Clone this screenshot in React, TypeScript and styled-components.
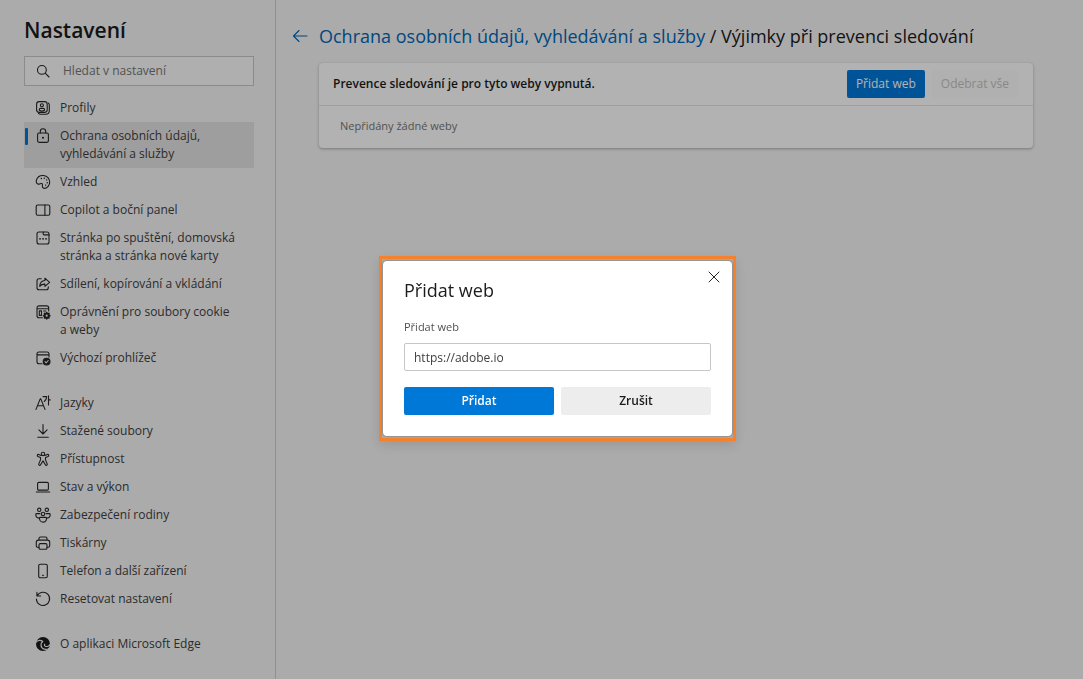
import React from 'react';
import styled, { createGlobalStyle, css } from 'styled-components';

const GlobalStyle = createGlobalStyle`
  *, *::before, *::after { box-sizing: border-box; }
  body {
    margin: 0;
    background: #f5f5f5;
    color: #1b1b1b;
    font-family: 'Open Sans', 'Noto Sans', sans-serif;
    font-size: 12px;
    line-height: 18px;
  }
  button, input { font: inherit; color: inherit; }
  h1, h2, p, ul { margin: 0; padding: 0; }
`;

const Page = styled.div`
  display: flex;
  min-height: 100vh;
`;

const Sidebar = styled.aside`
  flex: 0 0 276px;
  padding: 14px 21px 20px 24px;
  border-right: 1px solid #cfcfcf;
`;

const SidebarTitle = styled.h1`
  font-size: 21px;
  line-height: 32px;
  font-weight: 600;
`;

const SearchBox = styled.label`
  display: flex;
  align-items: center;
  gap: 12px;
  height: 30px;
  margin: 10px 0 8px;
  padding: 0 11px 0 10px;
  background: #fbfbfb;
  border: 1px solid #c8c8c8;
  svg { margin: 0; }
`;

const SearchInput = styled.input`
  flex: 1;
  min-width: 0;
  padding: 0;
  border: 0;
  outline: 0;
  background: transparent;
  &::placeholder { color: #767676; opacity: 1; }
`;

const NavList = styled.ul`
  list-style: none;
  & + & { margin-top: 17px; }
`;

const NavLink = styled.a<{ $active?: boolean }>`
  position: relative;
  display: flex;
  align-items: flex-start;
  gap: 9px;
  padding: 5px 8px 5px 11px;
  color: #404040;
  text-decoration: none;
  ${({ $active }) => $active && css`
    background: #e3e3e3;
    &::before {
      content: '';
      position: absolute;
      left: 1px;
      top: 6px;
      width: 3px;
      height: 17px;
      border-radius: 1px;
      background: #0078d4;
    }
  `}
`;

const Glyph = styled.svg`
  flex: none;
  width: 16px;
  height: 16px;
  margin-top: 1px;
  fill: none;
  stroke: #262626;
  stroke-width: 1.1;
  stroke-linecap: round;
  stroke-linejoin: round;
`;

const Main = styled.main`
  flex: 1;
  min-width: 0;
  padding: 22px 50px 24px 16px;
`;

const Heading = styled.header`
  display: flex;
  align-items: center;
  gap: 11px;
`;

const BackButton = styled.button`
  display: flex;
  padding: 0;
  border: 0;
  background: none;
  svg { stroke: #0067b8; margin: 0; }
`;

const Breadcrumb = styled.h2`
  font-size: 18px;
  line-height: 28px;
  font-weight: 500;
  white-space: nowrap;
  a { color: #0067b8; text-decoration: none; }
`;

const Card = styled.section`
  margin: 13px 0 0 27px;
  background: #fff;
  border-radius: 4px;
  box-shadow: 0 1px 3px rgba(0, 0, 0, 0.3);
`;

const CardHeader = styled.div`
  display: flex;
  align-items: center;
  gap: 7px;
  min-height: 43px;
  padding: 7px 15px 7px 14px;
  border-bottom: 1px solid #e6e6e6;
`;

const CardTitle = styled.p`
  flex: 1;
  font-weight: 600;
`;

const CardBody = styled.p`
  padding: 11px 21px 13px;
  color: #767676;
  font-size: 11px;
`;

const Button = styled.button<{ $kind: 'primary' | 'plain' | 'ghost'; $strong?: boolean }>`
  height: 28px;
  padding: 0 9px;
  border: 0;
  border-radius: 2px;
  white-space: nowrap;
  font-weight: ${({ $strong }) => ($strong ? 600 : 400)};
  ${({ $kind }) => $kind === 'primary' && css`background: #0078d7; color: #fff;`}
  ${({ $kind }) => $kind === 'plain' && css`background: #ededed; color: #1b1b1b;`}
  ${({ $kind }) => $kind === 'ghost' && css`background: #fcfcfc; color: #c4c4c4;`}
`;

const Overlay = styled.div`
  position: fixed;
  inset: 0;
  display: flex;
  align-items: center;
  justify-content: center;
  padding: 18px 0 0 32px;
  background: rgba(0, 0, 0, 0.3);
`;

const Highlight = styled.div`
  padding: 2px 1px;
  border: 3px solid #f5812c;
  box-shadow: 0 4px 12px rgba(0, 0, 0, 0.12);
`;

const Dialog = styled.form`
  position: relative;
  width: 349px;
  padding: 14px 21px 21px;
  background: #fff;
  border-radius: 4px;
  box-shadow: 0 0 2px rgba(0, 0, 0, 0.5);
`;

const DialogTitle = styled.h2`
  font-size: 18px;
  line-height: 30px;
  font-weight: 500;
`;

const FieldLabel = styled.label`
  display: block;
  margin: 13px 0 7px;
  font-size: 11px;
  color: #505050;
`;

const TextField = styled.input`
  display: block;
  width: 100%;
  height: 28px;
  padding: 0 9px;
  border: 1px solid #c6c6c6;
  border-radius: 2px;
  outline: 0;
  color: #404040;
`;

const Actions = styled.div`
  display: grid;
  grid-template-columns: 1fr 1fr;
  gap: 7px;
  margin-top: 16px;
`;

const CloseButton = styled.button`
  position: absolute;
  top: 8px;
  right: 10px;
  display: flex;
  padding: 0;
  border: 0;
  background: none;
  svg { margin: 0; }
`;

const icons = {
  search: <><circle cx="6.9" cy="6.9" r="4.4" /><path d="M10.2 10.2 14 14" /></>,
  profile: (
    <>
      <rect x="1.6" y="1.6" width="10.6" height="10.8" rx="2.6" />
      <path d="M13.4 3.2c.6.5.9 1.1.9 2v5.6c0 2.2-1.3 3.5-3.5 3.5H5.6c-.9 0-1.6-.3-2.1-.9" />
      <circle cx="6.9" cy="5.2" r="1.5" />
      <path d="M4.3 10.2V9.5c0-.7.5-1.1 1.1-1.1h3c.7 0 1.1.4 1.1 1.1v.7c-1.4 1-3.8 1-5.2 0Z" />
    </>
  ),
  lock: (
    <>
      <rect x="2.6" y="5" width="10.8" height="9.4" rx="1.6" />
      <path d="M5.3 4.900V3.500a2.700 2.700 0 0 1 5.400 0v1.400" />
      <circle cx="8" cy="9.7" r=".5" fill="#262626" />
    </>
  ),
  palette: (
    <>
      <path d="M1.3 6.5C2.2 3.2 5.3 1.2 8.7 1.5c3.4.4 6 3.2 6 6.6 0 3.2-2.3 6.3-5 6.3-1.6 0-2.5-1-2.3-2.4.2-1.2.2-2-.5-2.4-.9-.5-1.6.2-2.7.5-1.9.4-3.3-1.3-2.9-3.6Z" />
      <path d="M6.3 4.5h.1M9.2 4.2h.1M11.6 5.9h.1M12.2 8.7h.1M10.6 11.1h.1" strokeWidth="1.4" />
    </>
  ),
  panel: <><rect x="1.2" y="3" width="13.6" height="10.2" rx="1.5" /><path d="M9.9 3v10.2" /></>,
  startPage: (
    <>
      <rect x="2" y="2" width="12" height="12" rx="2" />
      <path d="M8.2 2v2c0 .6.3.9.9.9H14" />
      <path d="M5 8.8h.1M8 8.8h.1M11 8.8h.1" strokeWidth="1.7" />
    </>
  ),
  share: (
    <>
      <path d="M6.2 2.8H4A2 2 0 0 0 2 4.8v7A2 2 0 0 0 4 13.8h7.3a2 2 0 0 0 2-2v-.9" />
      <path d="M9.9 2.2 14.6 6.3 9.9 10.3V8.1C7.6 8 6 8.7 4.7 10.3 4.9 7.1 6.6 4.8 9.9 4.5Z" />
    </>
  ),
  permissions: (
    <>
      <path d="M7.4 13.7H4A2 2 0 0 1 2 11.7V3.9a2 2 0 0 1 2-2h7.7a2 2 0 0 1 2 2v3M2 4.7h11.7M4.3 6.9h2.2v4.5H4.3ZM8.6 7h2.3" />
      <circle cx="11.7" cy="11.7" r="2.1" strokeWidth="2" />
      <path d="M11.7 8.4v.8M11.7 14.2v.8M8.4 11.7h.8M14.2 11.7h.8M9.4 9.4l.5.5M13.5 13.5l.5.5M14 9.4l-.5.5M9.9 13.5l-.5.5" strokeWidth="1.5" />
    </>
  ),
  defaultBrowser: (
    <>
      <path d="M7 13.7H4A2 2 0 0 1 2 11.7V4a2 2 0 0 1 2-2h8a2 2 0 0 1 2 2v3M2 4.9h12" />
      <circle cx="11.6" cy="11.6" r="3.4" fill="#262626" />
      <path d="m10 11.7 1.1 1.1 2.1-2.2" stroke="#e8e8e8" />
    </>
  ),
  language: (
    <>
      <path d="M1 14.4 5.2 3.9h.6L10 14.4M2.500 10.800h6" />
      <path d="M8 1.600h3.700c-.1 2.400-.8 3.800-2.500 4.900M13.500.8v9.200M13.500 4.900h1.700" />
    </>
  ),
  download: <path d="M8 1.5v9.3M3.9 6.9 8 11l4.1-4.1M2.7 14.3h10.6" />,
  accessibility: (
    <>
      <circle cx="8" cy="2.9" r="1.7" />
      <path d="M6.2 4.5 3.7 3.5c-1.4-.4-2 1.3-.8 1.9l2.6 1.2v2.3l-1.7 4c-.5 1.4 1.2 2.1 1.8.8L8 9.9l2.4 3.8c.6 1.3 2.3.6 1.8-.8l-1.7-4V6.6l2.6-1.2c1.2-.6.6-2.3-.8-1.9L9.8 4.5" />
    </>
  ),
  laptop: <><rect x="2.6" y="3.4" width="10.8" height="7.7" rx="1.2" /><path d="M1.3 13h13.4" /></>,
  family: (
    <>
      <circle cx="4.2" cy="2.8" r="1.7" /><circle cx="11.8" cy="2.8" r="1.7" /><circle cx="8" cy="7" r="1.7" />
      <path d="M5 6.6H1.7c-.5 0-.9.4-.9.9 0 2.2 1.2 3.5 3.2 3.6M11 6.6h3.3c.5 0 .9.4.9.9 0 2.2-1.2 3.5-3.2 3.6M5.3 10.4h5.4c.5 0 .8.3.8.8 0 2.2-1.4 3.9-3.5 3.9s-3.5-1.7-3.5-3.9c0-.5.3-.8.8-.8Z" />
    </>
  ),
  printer: (
    <>
      <path d="M4 12.2H2.7c-.8 0-1.4-.6-1.4-1.4V7.2c0-1.2.9-2.1 2.1-2.1h9.2c1.2 0 2.1.9 2.1 2.1v3.6c0 .8-.6 1.4-1.4 1.4H12M4 5V3.5C4 2.7 4.7 2 5.5 2h5c.8 0 1.5.7 1.5 1.5V5" />
      <rect x="4" y="8.6" width="8" height="5.6" rx="1.3" />
    </>
  ),
  phone: <><rect x="3.7" y="1.2" width="8.6" height="13.6" rx="1.6" /><path d="M7.4 12.2h1.2" /></>,
  reset: <path d="M1.900 1.400v3.600h3.700M2.200 4.700A6.600 6.600 0 1 1 1.400 8" />,
  edge: (
    <>
      <circle cx="8" cy="8" r="7" fill="#1b1b1b" stroke="none" />
      <g stroke="#f0f0f0" strokeWidth="1.2">
        <path d="M.8 6.300C2.800 4 6 3.800 7.600 5.500" />
        <path d="M7.600 5.500C5.200 7.500 5.200 11.800 9.400 13.200c1.700.5 3.400.1 4.800-1.100" />
        <path d="M15.200 8.300c-.7 1.900-3.200 2.700-5 1.900-1.100-.5-.9-1.300-.5-2" />
      </g>
    </>
  ),
  back: <path d="M15 8H1.5M7 2.5 1.5 8 7 13.5" />,
  close: <path d="m3 3 10 10M13 3 3 13" strokeWidth="1" />,
};

type IconName = keyof typeof icons;

const Icon = ({ name }: { name: IconName }) => (
  <Glyph viewBox="0 0 16 16" aria-hidden="true">{icons[name]}</Glyph>
);

const sections: { icon: IconName; label: string; active?: boolean }[][] = [
  [
    { icon: 'profile', label: 'Profily' },
    { icon: 'lock', label: 'Ochrana osobních údajů, vyhledávání a služby', active: true },
    { icon: 'palette', label: 'Vzhled' },
    { icon: 'panel', label: 'Copilot a boční panel' },
    { icon: 'startPage', label: 'Stránka po spuštění, domovská stránka a stránka nové karty' },
    { icon: 'share', label: 'Sdílení, kopírování a vkládání' },
    { icon: 'permissions', label: 'Oprávnění pro soubory cookie a\u00a0weby' },
    { icon: 'defaultBrowser', label: 'Výchozí prohlížeč' },
  ],
  [
    { icon: 'language', label: 'Jazyky' },
    { icon: 'download', label: 'Stažené soubory' },
    { icon: 'accessibility', label: 'Přístupnost' },
    { icon: 'laptop', label: 'Stav a výkon' },
    { icon: 'family', label: 'Zabezpečení rodiny' },
    { icon: 'printer', label: 'Tiskárny' },
    { icon: 'phone', label: 'Telefon a další zařízení' },
    { icon: 'reset', label: 'Resetovat nastavení' },
  ],
  [{ icon: 'edge', label: 'O aplikaci Microsoft Edge' }],
];

export default function App() {
  return (
    <>
      <GlobalStyle />
      <Page>
        <Sidebar>
          <SidebarTitle>Nastavení</SidebarTitle>
          <SearchBox>
            <Icon name="search" />
            <SearchInput type="search" placeholder="Hledat v nastavení" aria-label="Hledat v nastavení" />
          </SearchBox>
          <nav>
            {sections.map((items, index) => (
              <NavList key={index}>
                {items.map(({ icon, label, active }) => (
                  <li key={label}>
                    <NavLink href="#" $active={active} aria-current={active ? 'page' : undefined}>
                      <Icon name={icon} />
                      <span>{label}</span>
                    </NavLink>
                  </li>
                ))}
              </NavList>
            ))}
          </nav>
        </Sidebar>
        <Main>
          <Heading>
            <BackButton type="button" aria-label="Zpět"><Icon name="back" /></BackButton>
            <Breadcrumb>
              <a href="#">Ochrana osobních údajů, vyhledávání a služby</a> / Výjimky při prevenci sledování
            </Breadcrumb>
          </Heading>
          <Card>
            <CardHeader>
              <CardTitle>Prevence sledování je pro tyto weby vypnutá.</CardTitle>
              <Button type="button" $kind="primary">Přidat web</Button>
              <Button type="button" $kind="ghost" disabled>Odebrat vše</Button>
            </CardHeader>
            <CardBody>Nepřidány žádné weby</CardBody>
          </Card>
        </Main>
      </Page>
      <Overlay>
        <Highlight>
          <Dialog role="dialog" aria-modal="true" aria-labelledby="dialog-title" onSubmit={(e) => e.preventDefault()}>
            <DialogTitle id="dialog-title">Přidat web</DialogTitle>
            <FieldLabel htmlFor="site">Přidat web</FieldLabel>
            <TextField id="site" type="text" defaultValue="https://adobe.io" />
            <Actions>
              <Button type="submit" $kind="primary" $strong>Přidat</Button>
              <Button type="button" $kind="plain" $strong>Zrušit</Button>
            </Actions>
            <CloseButton type="button" aria-label="Zavřít"><Icon name="close" /></CloseButton>
          </Dialog>
        </Highlight>
      </Overlay>
    </>
  );
}
